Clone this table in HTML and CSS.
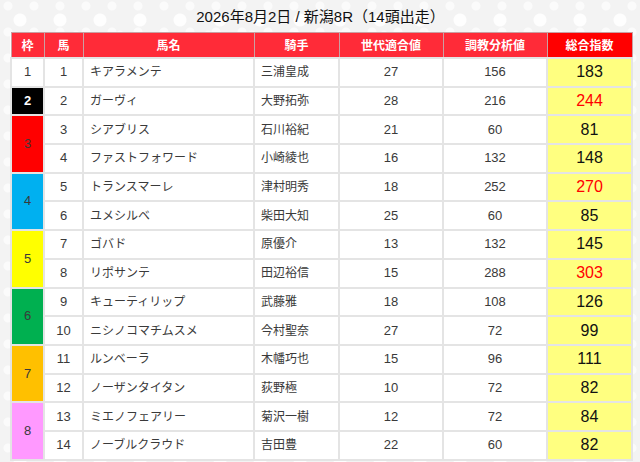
FILE: index.html
```html
<!DOCTYPE html>
<html lang="ja">
<head>
<meta charset="utf-8">
<title>2026年8月2日 / 新潟8R</title>
<link rel="stylesheet" href="styles.css">
</head>
<body>
<div class="page">
  <h1 class="title">2026年8月2日 / 新潟8R（14頭出走）</h1>
  <table class="race">
    <colgroup>
      <col class="c-waku"><col class="c-uma"><col class="c-name"><col class="c-jockey"><col class="c-val"><col class="c-val"><col class="c-total">
    </colgroup>
    <thead>
      <tr>
        <th>枠</th><th>馬</th><th>馬名</th><th>騎手</th><th>世代適合値</th><th>調教分析値</th><th class="th-total">総合指数</th>
      </tr>
    </thead>
    <tbody>
      <tr><td class="waku w1">1</td><td class="num">1</td><td class="name">キアラメンテ</td><td class="name">三浦皇成</td><td class="num">27</td><td class="num">156</td><td class="total">183</td></tr>
      <tr><td class="waku w2">2</td><td class="num">2</td><td class="name">ガーヴィ</td><td class="name">大野拓弥</td><td class="num">28</td><td class="num">216</td><td class="total hot">244</td></tr>
      <tr><td class="waku w3" rowspan="2">3</td><td class="num">3</td><td class="name">シアブリス</td><td class="name">石川裕紀</td><td class="num">21</td><td class="num">60</td><td class="total">81</td></tr>
      <tr><td class="num">4</td><td class="name">ファストフォワード</td><td class="name">小崎綾也</td><td class="num">16</td><td class="num">132</td><td class="total">148</td></tr>
      <tr><td class="waku w4" rowspan="2">4</td><td class="num">5</td><td class="name">トランスマーレ</td><td class="name">津村明秀</td><td class="num">18</td><td class="num">252</td><td class="total hot">270</td></tr>
      <tr><td class="num">6</td><td class="name">ユメシルベ</td><td class="name">柴田大知</td><td class="num">25</td><td class="num">60</td><td class="total">85</td></tr>
      <tr><td class="waku w5" rowspan="2">5</td><td class="num">7</td><td class="name">ゴバド</td><td class="name">原優介</td><td class="num">13</td><td class="num">132</td><td class="total">145</td></tr>
      <tr><td class="num">8</td><td class="name">リポサンテ</td><td class="name">田辺裕信</td><td class="num">15</td><td class="num">288</td><td class="total hot">303</td></tr>
      <tr><td class="waku w6" rowspan="2">6</td><td class="num">9</td><td class="name">キューティリップ</td><td class="name">武藤雅</td><td class="num">18</td><td class="num">108</td><td class="total">126</td></tr>
      <tr><td class="num">10</td><td class="name">ニシノコマチムスメ</td><td class="name">今村聖奈</td><td class="num">27</td><td class="num">72</td><td class="total">99</td></tr>
      <tr><td class="waku w7" rowspan="2">7</td><td class="num">11</td><td class="name">ルンベーラ</td><td class="name">木幡巧也</td><td class="num">15</td><td class="num">96</td><td class="total">111</td></tr>
      <tr><td class="num">12</td><td class="name">ノーザンタイタン</td><td class="name">荻野極</td><td class="num">10</td><td class="num">72</td><td class="total">82</td></tr>
      <tr><td class="waku w8" rowspan="2">8</td><td class="num">13</td><td class="name">ミエノフェアリー</td><td class="name">菊沢一樹</td><td class="num">12</td><td class="num">72</td><td class="total">84</td></tr>
      <tr><td class="num">14</td><td class="name">ノーブルクラウド</td><td class="name">吉田豊</td><td class="num">22</td><td class="num">60</td><td class="total">82</td></tr>
    </tbody>
  </table>
</div>
</body>
</html>
```
FILE: styles.css
```css
html, body {
  margin: 0;
  padding: 0;
}
body {
  width: 640px;
  height: 462px;
  overflow: hidden;
  font-family: "Liberation Sans", "Noto Sans CJK JP", sans-serif;
  color: #333;
  background-color: #f3f3f3;
  background-image:
    radial-gradient(circle at 20px 20px, rgba(255,255,255,0.9) 0 6px, transparent 7px),
    radial-gradient(circle at 8px 6px, rgba(255,255,255,0.7) 0 4px, transparent 5px),
    radial-gradient(circle at 32px 34px, rgba(255,255,255,0.6) 0 3px, transparent 4px);
  background-size: 40px 40px, 26px 26px, 44px 44px;
}
.page {
  padding: 0 9px 0 10px;
}
.title {
  margin: 0;
  height: 32px;
  line-height: 33px;
  font-size: 15px;
  font-weight: normal;
  color: #111;
  text-align: center;
}
.race {
  width: 621px;
  table-layout: fixed;
  border-collapse: collapse;
  background: #fff;
  border: 1px solid #cfcfcf;
}
.c-waku { width: 33px; }
.c-uma { width: 39px; }
.c-name { width: 171px; }
.c-jockey { width: 85px; }
.c-val { width: 104px; }
.c-total { width: 85px; }
.race th {
  height: 24px;
  padding: 0;
  background: #ff2b38;
  color: #fff;
  font-family: "Noto Sans CJK JP", sans-serif;
  font-size: 12px;
  font-weight: bold;
  border: 1px solid #c9a0a3;
  line-height: 24px;
}
.race th.th-total {
  background: #ff0000;
}
.race tbody tr {
  height: 28.7px;
}
.race td {
  padding: 0;
  border: 2px solid #e4e4e4;
  font-size: 12px;
  line-height: 16px;
  color: #3a3a3a;
}
.race td.num {
  text-align: center;
  font-size: 13px;
}
.race td.name {
  padding-left: 6px;
  white-space: nowrap;
  overflow: hidden;
}
.race td.total {
  text-align: center;
  background: #ffff80;
  font-size: 16px;
  color: #111;
}
.race td.total.hot {
  color: #ff0000;
}
.race td.waku {
  text-align: center;
  font-size: 13px;
}
.w1 { background: #fff; }
.w2 { background: #000; color: #fff !important; font-weight: bold; }
.w3 { background: #ff0000; }
.w4 { background: #00b0f0; }
.w5 { background: #ffff00; }
.w6 { background: #00b050; }
.w7 { background: #ffc000; }
.w8 { background: #ff99ff; }
```
